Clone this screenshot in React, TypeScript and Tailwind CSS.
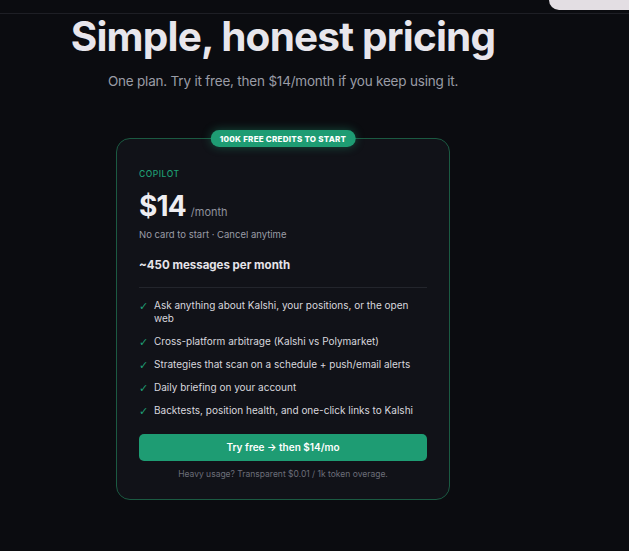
const features = [
  "Ask anything about Kalshi, your positions, or the open web",
  "Cross-platform arbitrage (Kalshi vs Polymarket)",
  "Strategies that scan on a schedule + push/email alerts",
  "Daily briefing on your account",
  "Backtests, position health, and one-click links to Kalshi",
];

export default function App() {
  return (
    <div className="min-h-screen bg-[#0b0c10] text-[#e6e4ea] font-['Inter',sans-serif] overflow-hidden">
      {/* clipped sticky header */}
      <div className="h-[14px] border-b border-[#1e1f25] flex justify-end">
        <div className="w-[80px] h-[10px] bg-[#e3dee3] rounded-bl-[10px]" />
      </div>

      <main className="flex flex-col items-center pr-[63px]">
        <h1 className="mt-[-1px] text-[40.5px] leading-[48px] font-bold tracking-[-0.02em] text-[#e8e6ec]">
          Simple, honest pricing
        </h1>
        <p className="mt-[11px] text-[13.5px] leading-[18px] text-[#9a9ca6] tracking-[-0.015em]">
          One plan. Try it free, then $14/month if you keep using it.
        </p>

        <div className="relative mt-[48px] w-[334px] rounded-[14px] border border-[#1b5a42] bg-[#111218] px-[22px] pt-[29px] pb-[19px]">
          <div className="absolute left-1/2 top-[-9px] -translate-x-1/2 rounded-full bg-[#1e9c73] px-[9px] h-[17px] flex items-center text-[8px] font-extrabold tracking-[0.03em] text-white whitespace-nowrap shadow-[0_0_10px_rgba(30,156,115,0.45)]">
            100K FREE CREDITS TO START
          </div>

          <div className="text-[8.5px] leading-[12px] font-medium tracking-[0.06em] text-[#1f9e74]">
            COPILOT
          </div>
          <div className="mt-[10px] flex items-baseline gap-[5px]">
            <span className="text-[28px] leading-[32px] font-bold tracking-[-0.03em] text-[#eeedf1]">
              $14
            </span>
            <span className="text-[11px] text-[#8f919b]">/month</span>
          </div>
          <div className="mt-[7px] text-[9.5px] leading-[12px] text-[#9a9ca6]">
            No card to start · Cancel anytime
          </div>
          <div className="mt-[16px] text-[11.5px] leading-[16px] font-bold text-[#e6e4ea]">
            ~450 messages per month
          </div>

          <div className="mt-[14px] h-px bg-[#23252c]" />

          <ul className="mt-[11px] flex flex-col gap-[10px]">
            {features.map((f) => (
              <li key={f} className="flex gap-[6px]">
                <span className="w-[9px] shrink-0 text-[11px] leading-[15px] -mb-[2px] text-[#1f9e74] font-['DejaVu_Sans',sans-serif]">
                  ✓
                </span>
                <span className="text-[10px] leading-[13px] text-[#d8d7de] pr-[14px]">{f}</span>
              </li>
            ))}
          </ul>

          <button className="mt-[17px] w-full h-[27px] rounded-[5px] bg-[#1e9c73] text-[10px] font-semibold text-white">
            Try free → then $14/mo
          </button>
          <p className="mt-[8px] text-center text-[8.5px] leading-[11px] text-[#6c6e78]">
            Heavy usage? Transparent $0.01 / 1k token overage.
          </p>
        </div>
      </main>
    </div>
  );
}
